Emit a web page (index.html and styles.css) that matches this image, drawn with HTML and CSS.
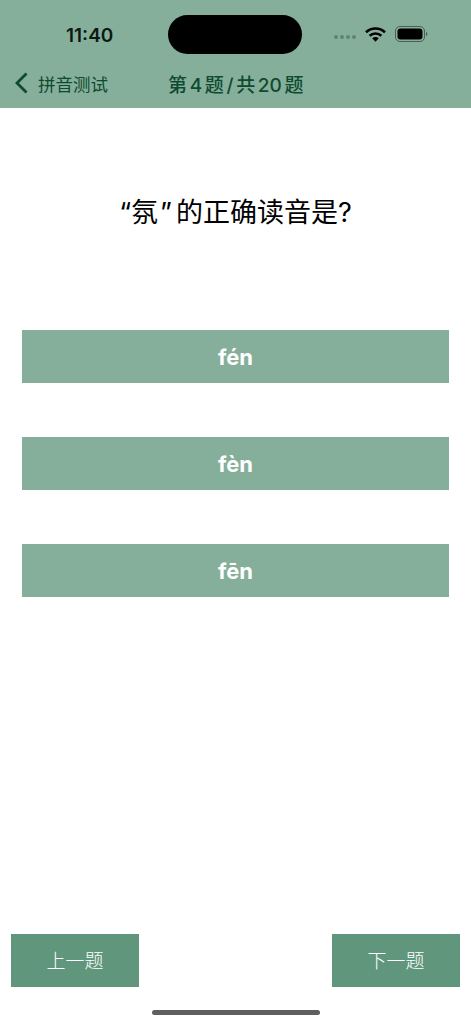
FILE: index.html
```html
<!DOCTYPE html>
<html lang="zh-CN">
<head>
	<meta charset="UTF-8">
	<meta name="viewport" content="width=device-width, initial-scale=1.0">
	<title>拼音测试</title>
	<link rel="stylesheet" href="styles.css">
</head>
<body>

	<div class="page">
		<header class="header">
			<div class="status">
				<span class="time">11:40</span>
				<span class="island"></span>
				<div class="status-icons">
					<span class="dots"><i></i><i></i><i></i><i></i></span>
					<svg class="wifi" width="21" height="15" viewBox="0 0 21 15">
						<path d="M1 5.2C6.4 0.3 14.6 0.3 20 5.2" fill="none" stroke="#000" stroke-width="2.6"/>
						<path d="M4.6 8.8C8 5.8 13 5.8 16.4 8.8" fill="none" stroke="#000" stroke-width="2.6"/>
						<path d="M7.2 11.3C9.2 9.7 11.8 9.7 13.8 11.3L10.5 14.8Z" fill="#000"/>
					</svg>
					<svg class="battery" width="33" height="16" viewBox="0 0 33 16">
						<rect x="0.5" y="0.5" width="29" height="15" rx="4.5" fill="none" stroke="#000" stroke-opacity="0.45"/>
						<rect x="2.5" y="2.5" width="25" height="11" rx="3" fill="#000"/>
						<path d="M31 6v4c.8-.3 1.400-1 1.400-2s-.6-1.700-1.400-2z" fill="#000" fill-opacity="0.45"/>
					</svg>
				</div>
			</div>
			<nav class="nav">
				<a class="back">
					<svg width="14" height="22" viewBox="0 0 14 22">
						<path d="M12.500 1.500L3 11l9.500 9.500" fill="none" stroke="#0f4a30" stroke-width="2.800"/>
					</svg>
					<span>拼音测试</span>
				</a>
				<div class="nav-title">第 4 题 / 共 20 题</div>
			</nav>
		</header>

		<main class="quiz">
			<h1 class="question">“氛<span class="close-quote">”</span>的正确读音是?</h1>
			<div class="options">
				<button class="option">fén</button>
				<button class="option">fèn</button>
				<button class="option">fēn</button>
			</div>
		</main>

		<footer class="footer">
			<button class="step">上一题</button>
			<button class="step">下一题</button>
		</footer>
		<div class="home-bar"></div>
	</div>

</body>
</html>
```

FILE: styles.css
```css
html, body {
	margin: 0;
	padding: 0;
	background: white;
	font-family: Inter, "Noto Sans CJK SC", sans-serif;
}

.page {
	width: 471px;
	height: 1024px;
	overflow: hidden;
	display: flex;
	flex-direction: column;
}

.header {
	height: 108px;
	background: #85af9a;
	flex-shrink: 0;
}

.status {
	display: flex;
	align-items: center;
	height: 40px;
	padding-top: 14px;
}

.time {
	width: 168px;
	padding: 2px 0 0 66px;
	box-sizing: border-box;
	font-size: 19px;
	font-weight: 600;
	color: #0c1a14;
}

.island {
	width: 134px;
	height: 39px;
	border-radius: 20px;
	background: black;
}

.status-icons {
	display: flex;
	align-items: center;
	padding-left: 32px;
}

.dots {
	display: flex;
	gap: 2px;
	margin-right: 9px;
	padding-top: 5px;
}

.dots i {
	width: 4px;
	height: 4px;
	border-radius: 50%;
	background: #5f8473;
}

.wifi {
	margin-right: 9px;
}

.nav {
	display: flex;
	align-items: center;
	height: 40px;
	margin-top: 9px;
	color: #0f4a30;
}

.back {
	display: flex;
	align-items: center;
	gap: 10px;
	width: 168px;
	padding-left: 14px;
	box-sizing: border-box;
	font-size: 17.500px;
}

.nav-title {
	font-size: 19px;
	font-weight: 500;
	white-space: nowrap;
	word-spacing: -2.400px;
}

.quiz {
	flex: 1;
}

.question {
	margin: 85px 0 0;
	height: 40px;
	line-height: 40px;
	text-align: center;
	font-size: 27px;
	font-weight: 400;
	color: black;
}

.close-quote {
	margin: 0 4px 0 2px;
}

.options {
	display: flex;
	flex-direction: column;
	gap: 54px;
	margin-top: 97px;
	padding: 0 22px;
}

button {
	border: none;
	color: white;
	font-family: inherit;
	padding: 0;
	cursor: pointer;
}

.option {
	height: 53px;
	background: #85af9a;
	font-size: 22px;
	font-weight: 700;
}

.footer {
	display: flex;
	justify-content: space-between;
	padding: 0 11px;
}

.step {
	width: 128px;
	height: 53px;
	padding-bottom: 3px;
	background: #5f967c;
	font-size: 19px;
	font-weight: 300;
}

.home-bar {
	width: 168px;
	height: 5px;
	margin: 23px auto 9px;
	border-radius: 3px;
	background: #5f5f5f;
}
```
